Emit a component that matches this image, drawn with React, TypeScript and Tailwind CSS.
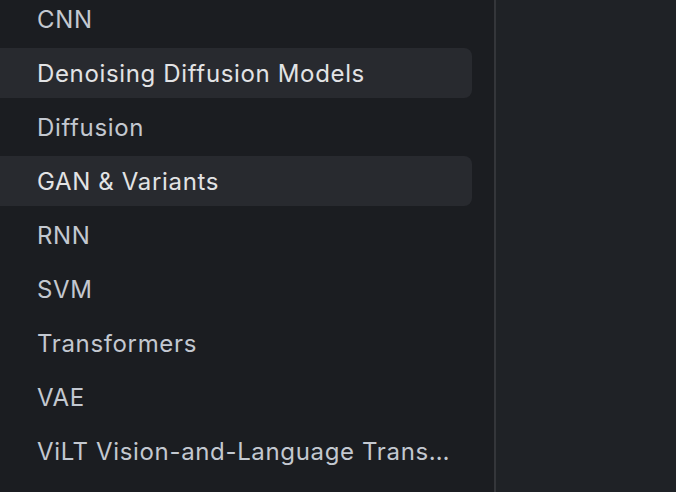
import React from "react";

const items = [
  { name: "CNN", active: false },
  { name: "Denoising Diffusion Models", active: true },
  { name: "Diffusion", active: false },
  { name: "GAN & Variants", active: true },
  { name: "RNN", active: false },
  { name: "SVM", active: false },
  { name: "Transformers", active: false },
  { name: "VAE", active: false },
  { name: "ViLT Vision-and-Language Transformer", active: false },
];

export default function App() {
  return (
    <div
      className="flex h-[492px] w-[676px] overflow-hidden bg-[#1f2226]"
      style={{ fontFamily: "Inter, 'Noto Sans', sans-serif" }}
    >
      <div className="w-[496px] shrink-0 overflow-hidden bg-[#1b1d21] border-r-2 border-[#34363a]">
        <div className="-mt-[6px] -ml-[12px] mr-[22px] flex flex-col gap-[4px]">
          {items.map((it) => (
            <div
              key={it.name}
              className={
                "flex h-[50px] items-center rounded-[8px] pl-[49px] pr-[15px] pt-[2px] " +
                (it.active ? "bg-[#282a2f] text-[#e2e3e5]" : "text-[#c3c8d0]")
              }
            >
              <span className="truncate text-[24px] tracking-[0.65px]">{it.name}</span>
            </div>
          ))}
        </div>
      </div>
      <div className="flex-1" />
    </div>
  );
}
